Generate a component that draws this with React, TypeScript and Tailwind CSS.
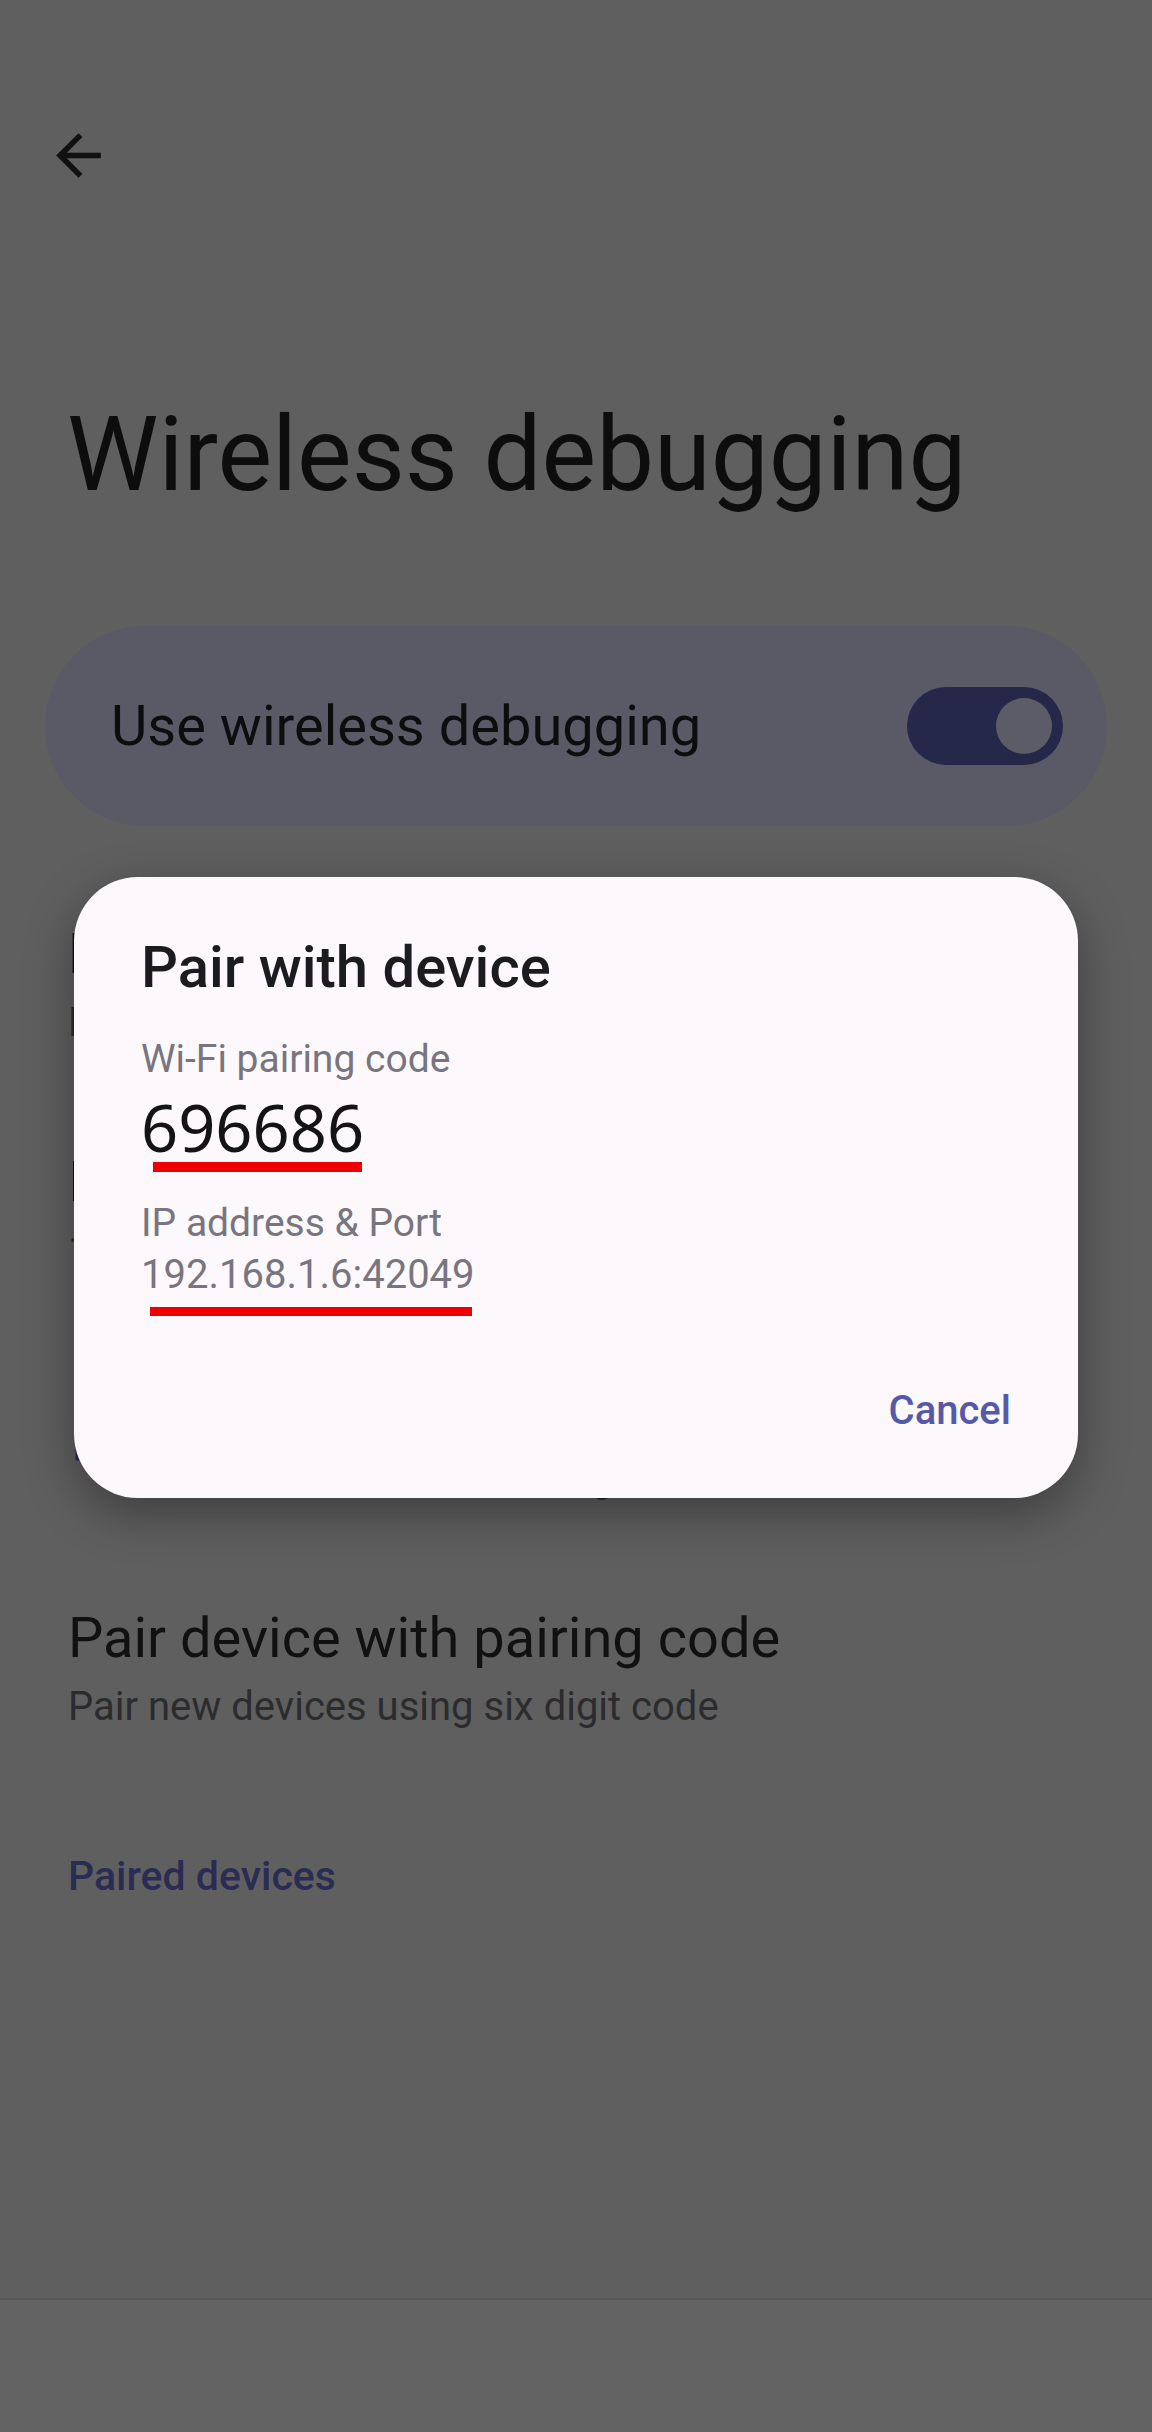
import { FC } from 'react';

const roboto = { fontFamily: 'Roboto, "Liberation Sans", sans-serif' };

const ListItem: FC<{ title: string; summary: string; indent?: boolean }> = ({
  title,
  summary,
  indent
}) => (
  <div className={`h-[228px] pt-[95px] ${indent ? 'pl-[208px]' : 'pl-[68px]'}`}>
    <div className="text-[56px] leading-[66px] text-[#111111] whitespace-nowrap">{title}</div>
    <div className="mt-[12px] text-[40px] leading-[48px] text-[#2c2c2e] whitespace-nowrap">
      {summary}
    </div>
  </div>
);

const Toggle: FC = () => (
  <div className="w-[156px] h-[78px] rounded-full bg-[#262849] flex items-center justify-end pr-[11px]">
    <div className="w-[56px] h-[56px] rounded-full bg-[#5b5c68]" />
  </div>
);

const PairDialog: FC = () => (
  <div className="absolute left-[74px] top-[877px] w-[1004px] h-[621px] rounded-[64px] bg-[#fcf8fc] shadow-[0_16px_48px_rgba(0,0,0,0.35)] pl-[67px] pr-[67px] pt-[57px]">
    <div className="text-[58px] leading-[67px] font-medium text-[#1c1b1f]">Pair with device</div>
    <div className="mt-[34px] text-[39px] leading-[48px] text-[#79757f]">Wi-Fi pairing code</div>
    <div
      className="mt-[6px] text-[65px] leading-[77px] text-[#141316]"
      style={{ fontFamily: '"Noto Sans", "Open Sans", sans-serif' }}
    >
      696686
    </div>
    <div className="mt-[33px] text-[39px] leading-[48px] text-[#79757f]">IP address &amp; Port</div>
    <div className="mt-[4px] text-[40px] leading-[48px] text-[#79757f]">192.168.1.6:42049</div>
    <div className="mt-[88px] flex justify-end">
      <span className="text-[40px] leading-[48px] font-medium text-[#5659a8]">Cancel</span>
    </div>

    {/* red marker lines drawn over the screenshot */}
    <div className="absolute left-[79px] top-[285px] w-[209px] h-[10px] bg-[#ee0000]" />
    <div className="absolute left-[76px] top-[430px] w-[322px] h-[9px] bg-[#ee0000]" />
  </div>
);

export default function App() {
  return (
    <div className="relative w-[1152px] h-[2432px] bg-[#5f5f5f] overflow-hidden" style={roboto}>
      <div className="h-[2298px]">
        <div className="pt-[122px] pl-[45px]">
          <svg width="67" height="67" viewBox="0 0 24 24" fill="#111111">
            <path d="M20 11H7.83l5.59-5.59L12 4l-8 8 8 8 1.41-1.41L7.83 13H20v-2z" />
          </svg>
        </div>

        <h1 className="mt-[206px] pl-[67px] text-[103px] leading-[120px] text-[#0d0d0d] whitespace-nowrap">
          Wireless debugging
        </h1>

        <div className="mt-[111px] mx-[45px] h-[200px] rounded-full bg-[#5a5a66] flex items-center justify-between pl-[66px] pr-[44px]">
          <span className="text-[56px] leading-[66px] text-[#0d0d10]">Use wireless debugging</span>
          <Toggle />
        </div>

        <ListItem title="Device name" summary="Pixel 7" />
        <ListItem title="IP address & Port" summary="192.168.1.6:37113" />
        <div className="relative">
          <svg
            className="absolute left-[70px] top-[94px]"
            width="90"
            height="90"
            viewBox="0 0 32 32"
            fill="none"
            stroke="#262849"
            strokeWidth="4"
          >
            <path d="M4 12V4h8M20 4h8v8M28 20v8h-8M12 28H4v-8" />
          </svg>
          <ListItem title="Pair device with QR code" summary="Pair new devices using QR code scanner" indent />
        </div>
        <ListItem title="Pair device with pairing code" summary="Pair new devices using six digit code" />

        <div className="mt-[114px] pl-[68px] text-[41px] leading-[48px] font-medium text-[#2b2c54]">
          Paired devices
        </div>
      </div>
      <div className="h-[2px] bg-[#575757]" />
      <div className="h-[132px] bg-[#636363]" />

      <PairDialog />
    </div>
  );
}
